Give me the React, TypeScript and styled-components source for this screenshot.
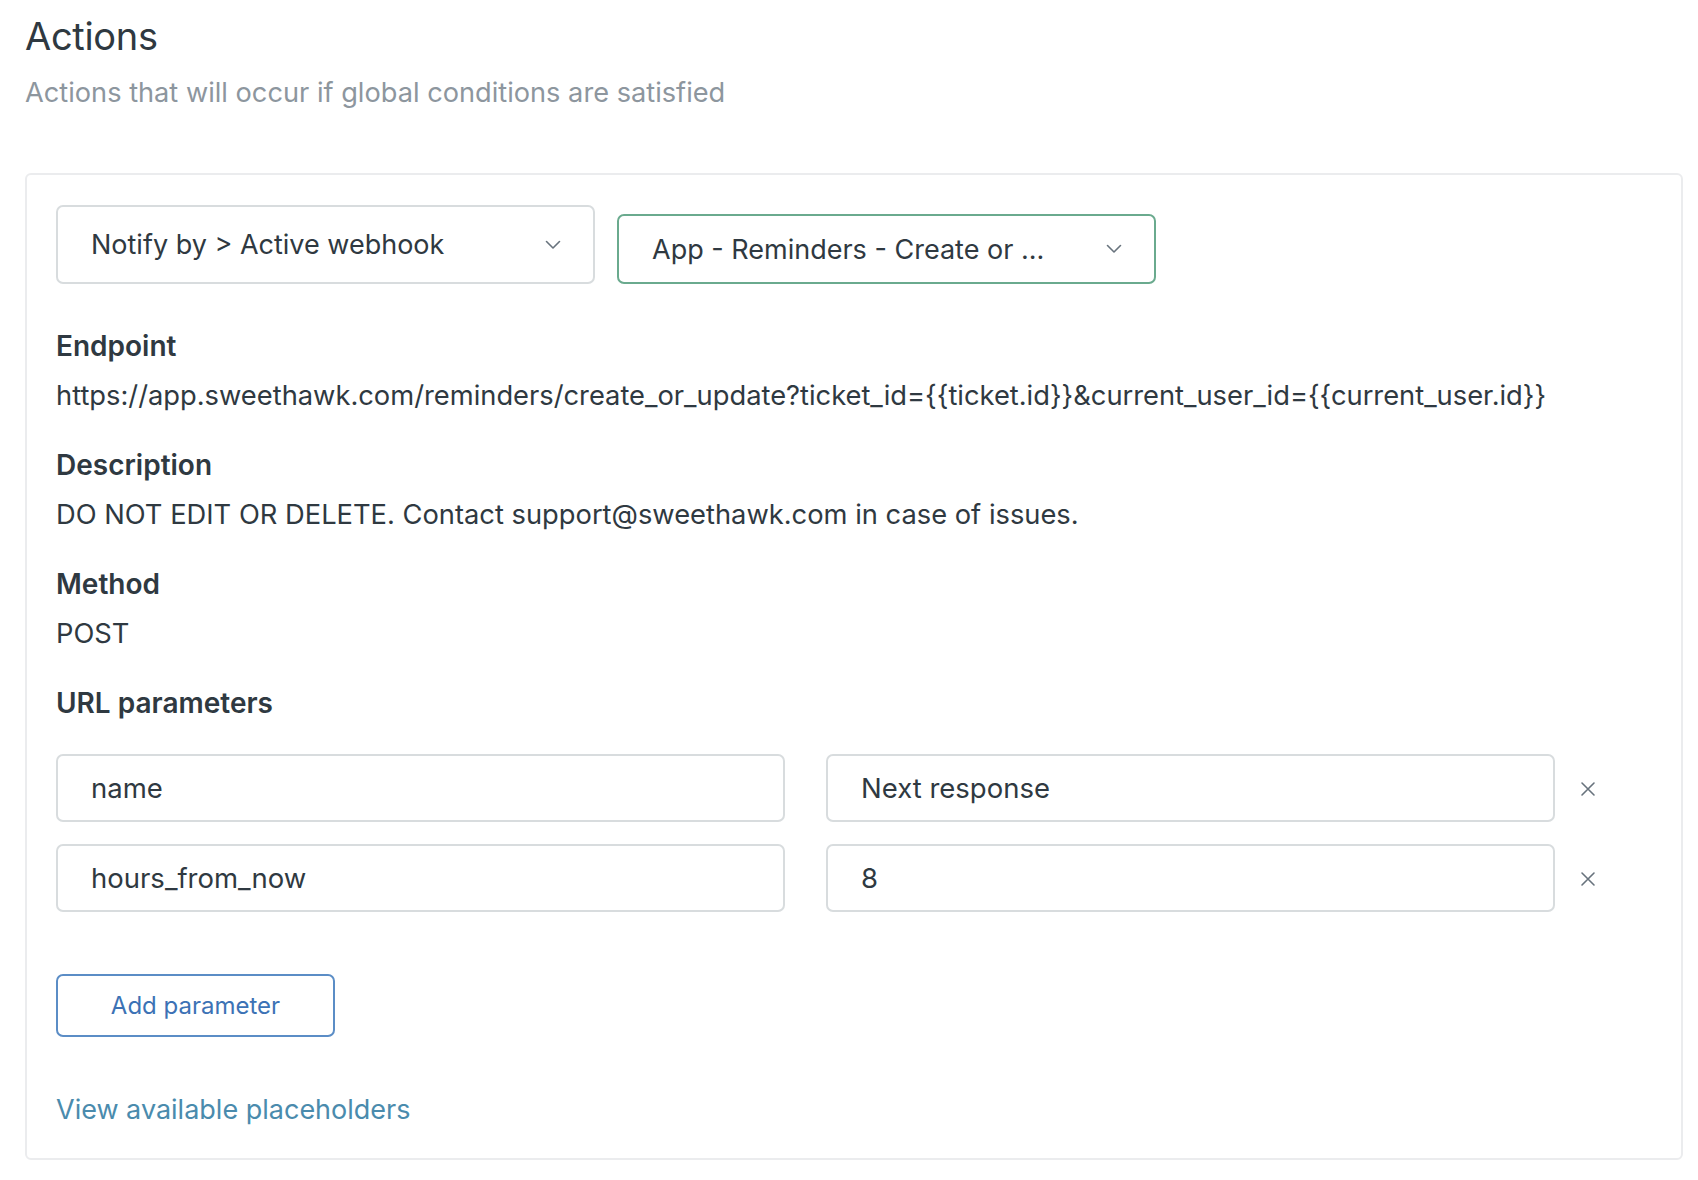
import React from 'react';
import styled, {createGlobalStyle} from 'styled-components';

const GlobalStyle = createGlobalStyle`
  body {
    margin: 0;
    background: #fff;
    font-family: Inter, "Noto Sans", sans-serif;
    color: #2f3941;
  }
`

const Page = styled.div`
  padding: 10px 15px 20px 25px;
`

const Title = styled.h1`
  margin: 0;
  font-size: 38px;
  font-weight: 400;
  line-height: 52px;
  color: #2f3941;
  letter-spacing: -0.3px;
`

const Subtitle = styled.p`
  margin: 11px 0 0;
  font-size: 27.2px;
  line-height: 40px;
  color: #8d969e;
`

const Card = styled.section`
  margin-top: 60px;
  border: 2px solid #ebecee;
  border-radius: 6px;
  padding: 30px 30px 28px 29px;
`

const SelectRow = styled.div`
  display: flex;
  align-items: flex-end;
  gap: 22px;
`

const Select = styled.div<{ $focused?: boolean }>`
  width: 539px;
  height: ${p => p.$focused ? 70 : 79}px;
  box-sizing: border-box;
  display: flex;
  align-items: center;
  justify-content: space-between;
  padding: 0 32px 0 33px;
  border: 2px solid ${p => p.$focused ? '#6aaa8e' : '#d8dcde'};
  border-radius: 7px;
  font-size: 27px;
  color: #2f3941;
`

const Chevron = () => (
  <svg width="16" height="10" viewBox="0 0 16 10" fill="none">
    <path d="M1.5 1.5L8 8L14.5 1.5" stroke="#68737d" strokeWidth="1.6" strokeLinecap="round" strokeLinejoin="round" />
  </svg>
)

const Field = styled.div<{ $first?: boolean }>`
  margin-top: ${p => p.$first ? 42 : 29}px;
`

const Label = styled.div`
  font-size: 28px;
  font-weight: 600;
  line-height: 40px;
`

const Value = styled.div`
  margin-top: 10px;
  font-size: 27.3px;
  line-height: 40px;
  white-space: nowrap;
`

const ParamList = styled.div`
  margin-top: 31px;
  display: flex;
  flex-direction: column;
  gap: 22px;
`

const ParamRow = styled.div`
  display: flex;
  align-items: center;
  padding-right: 30px;
`

const ParamPair = styled.div`
  flex: 1;
  display: grid;
  grid-template-columns: 1fr 1fr;
  gap: 41px;
`

const Input = styled.div`
  height: 68px;
  box-sizing: border-box;
  display: flex;
  align-items: center;
  padding: 0 33px;
  border: 2px solid #d8dcde;
  border-radius: 7px;
  font-size: 27.5px;
  color: #2f3941;
`

const RemoveButton = styled.button`
  width: 66px;
  height: 68px;
  display: flex;
  align-items: center;
  justify-content: center;
  border: none;
  background: none;
  padding: 2px 0 0;
  cursor: pointer;
`

const CloseIcon = () => (
  <svg width="16" height="16" viewBox="0 0 16 16" fill="none">
    <path d="M2 2L14 14M14 2L2 14" stroke="#68737d" strokeWidth="1.6" strokeLinecap="round" />
  </svg>
)

const AddButton = styled.button`
  margin-top: 62px;
  width: 279px;
  height: 63px;
  border: 2px solid #5b8dc6;
  border-radius: 7px;
  background: #fff;
  color: #3c72b5;
  font-family: Inter, "Noto Sans", sans-serif;
  font-size: 24px;
  cursor: pointer;
`

const PlaceholderLink = styled.a`
  display: block;
  margin-top: 53px;
  font-size: 27px;
  line-height: 40px;
  color: #4a8bad;
  text-decoration: none;
`

const params = [
  {key: 'name', value: 'Next response'},
  {key: 'hours_from_now', value: '8'},
]

const App: React.FC = () => {
  return (
    <>
      <GlobalStyle />
      <Page>
        <Title>Actions</Title>
        <Subtitle>Actions that will occur if global conditions are satisfied</Subtitle>
        <Card>
          <SelectRow>
            <Select>
              <span>Notify by &gt; Active webhook</span>
              <Chevron />
            </Select>
            <Select $focused>
              <span>App - Reminders - Create or ...</span>
              <Chevron />
            </Select>
          </SelectRow>

          <Field $first>
            <Label>Endpoint</Label>
            <Value>https://app.sweethawk.com/reminders/create_or_update?ticket_id={'{{ticket.id}}'}&amp;current_user_id={'{{current_user.id}}'}</Value>
          </Field>
          <Field>
            <Label>Description</Label>
            <Value>DO NOT EDIT OR DELETE. Contact support@sweethawk.com in case of issues.</Value>
          </Field>
          <Field>
            <Label>Method</Label>
            <Value>POST</Value>
          </Field>
          <Field>
            <Label>URL parameters</Label>
          </Field>

          <ParamList>
            {params.map(p => (
              <ParamRow key={p.key}>
                <ParamPair>
                  <Input>{p.key}</Input>
                  <Input>{p.value}</Input>
                </ParamPair>
                <RemoveButton aria-label="Remove parameter"><CloseIcon /></RemoveButton>
              </ParamRow>
            ))}
          </ParamList>

          <AddButton>Add parameter</AddButton>
          <PlaceholderLink href="#">View available placeholders</PlaceholderLink>
        </Card>
      </Page>
    </>
  )
}

export default App;
